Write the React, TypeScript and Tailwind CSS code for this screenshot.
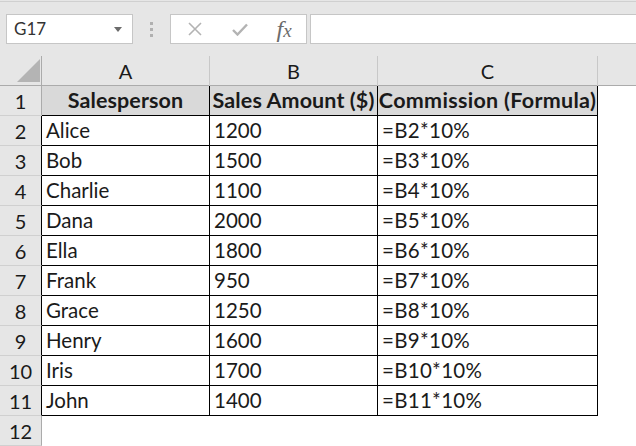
import React from "react";

const rows: [string, string, string][] = [
  ["Alice", "1200", "=B2*10%"],
  ["Bob", "1500", "=B3*10%"],
  ["Charlie", "1100", "=B4*10%"],
  ["Dana", "2000", "=B5*10%"],
  ["Ella", "1800", "=B6*10%"],
  ["Frank", "950", "=B7*10%"],
  ["Grace", "1250", "=B8*10%"],
  ["Henry", "1600", "=B9*10%"],
  ["Iris", "1700", "=B10*10%"],
  ["John", "1400", "=B11*10%"],
];

const font = { fontFamily: "Lato, 'Open Sans', sans-serif" };

export default function App() {
  return (
    <div className="w-[636px] h-[446px] overflow-hidden bg-[#e6e6e6] text-[#1a1a1a]" style={font}>
      {/* toolbar */}
      <div className="h-[55px] border-t border-[#d0d0d0] mt-[1px] flex items-start pt-[12px]">
        <div className="ml-[6px] w-[127px] h-[30px] bg-white border border-[#c6c6c6] flex items-center pl-[7px] pr-[10px] text-[17px] text-[#333]">
          <span className="flex-1">G17</span>
          <svg width="8" height="5" viewBox="0 0 8 5"><path d="M0 0H8L4 5Z" fill="#6b6b6b" /></svg>
        </div>
        <div className="w-[37px] flex flex-col items-center gap-[3px] pt-[8px]">
          <div className="w-[3px] h-[3px] bg-[#b0b0b0]" />
          <div className="w-[3px] h-[3px] bg-[#b0b0b0]" />
          <div className="w-[3px] h-[3px] bg-[#b0b0b0]" />
        </div>
        <div className="w-[137px] h-[30px] bg-white border border-[#c6c6c6] flex items-center">
          <div className="w-[44px] flex justify-center ml-[2px]">
            <svg width="14" height="14" viewBox="0 0 14 14"><path d="M1 1L13 13M13 1L1 13" stroke="#b3b3b3" strokeWidth="1.6" /></svg>
          </div>
          <div className="w-[46px] flex justify-center">
            <svg width="16" height="13" viewBox="0 0 16 13"><path d="M1 7L5.5 11.5L15 1.5" stroke="#b3b3b3" strokeWidth="2.4" fill="none" /></svg>
          </div>
          <div className="w-[44px] flex justify-center items-baseline italic text-[#6b6b6b] leading-none" style={{ fontFamily: "'Liberation Serif', serif" }}>
            <span className="text-[24px]">f</span><span className="text-[19px]">x</span>
          </div>
        </div>
        <div className="ml-[3px] flex-1 h-[30px] bg-white border border-[#c6c6c6] border-r-0" />
      </div>

      {/* column headers */}
      <div className="grid grid-cols-[42px_168px_168px_220px_1fr] h-[30px] border-b border-[#ababab] text-[20px]">
        <div className="relative border-r border-[#ababab]">
          <svg className="absolute left-[17px] top-[3px]" width="23" height="23" viewBox="0 0 23 23"><path d="M23 0V23H0Z" fill="#b4b4b4" /></svg>
        </div>
        <div className="border-r border-[#c8c8c8] flex items-center justify-center">A</div>
        <div className="border-r border-[#c8c8c8] flex items-center justify-center">B</div>
        <div className="border-r border-[#c8c8c8] flex items-center justify-center">C</div>
        <div />
      </div>

      {/* rows */}
      <div className="grid grid-cols-[42px_168px_168px_220px_1fr] text-[20px] leading-none">
        <div className="h-[30px] border-b border-r border-[#ababab] border-b-[#d0d0d0] flex items-center justify-center">1</div>
        <div className="h-[30px] bg-[#d9d9d9] border-r border-b border-black flex items-center justify-center font-bold text-[21.5px] tracking-[0.1px]">Salesperson</div>
        <div className="h-[30px] bg-[#d9d9d9] border-r border-b border-black flex items-center justify-center font-bold text-[21.5px] tracking-[0.1px] whitespace-nowrap">Sales Amount ($)</div>
        <div className="h-[30px] bg-[#d9d9d9] border-r border-b border-black flex items-center justify-center font-bold text-[21.5px] tracking-[0.3px] whitespace-nowrap">Commission (Formula)</div>
        <div className="h-[30px] bg-white" />
        {rows.map((r, i) => (
          <React.Fragment key={i}>
            <div className="h-[30px] border-b border-r border-[#ababab] border-b-[#d0d0d0] border-r-black flex items-center justify-center">{i + 2}</div>
            <div className="h-[30px] bg-white border-r border-b border-black flex items-center pl-[4px] text-[20.5px]">{r[0]}</div>
            <div className="h-[30px] bg-white border-r border-b border-black flex items-center pl-[4px] text-[20.5px]">{r[1]}</div>
            <div className="h-[30px] bg-white border-r border-b border-black flex items-center pl-[4px] text-[20.5px] tracking-[0.3px]">{r[2]}</div>
            <div className="h-[30px] bg-white" />
          </React.Fragment>
        ))}
        <div className="h-[30px] border-b border-r border-[#ababab] border-b-[#d0d0d0] flex items-center justify-center">12</div>
        <div className="h-[30px] bg-white col-span-4" />
      </div>
    </div>
  );
}
